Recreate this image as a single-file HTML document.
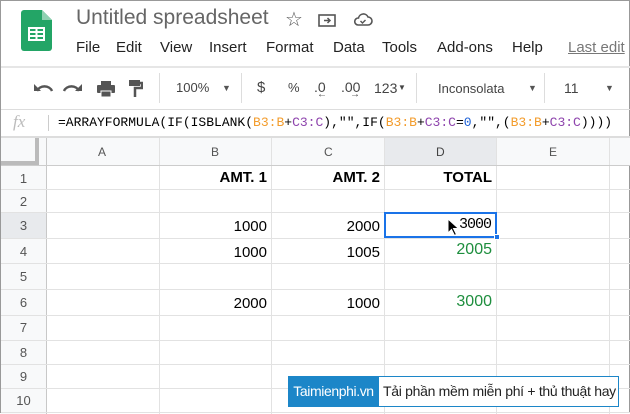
<!DOCTYPE html>
<html><head><meta charset="utf-8"><style>
*{margin:0;padding:0;box-sizing:border-box}
body{width:630px;height:413px;overflow:hidden;background:#fff;font-family:"Liberation Sans",Arial,sans-serif;position:relative;border:1px solid #999}
.a{position:absolute;white-space:nowrap}
.grid div{position:absolute}
.vl{background:#e2e2e2;width:1px;top:137px;height:276px}
.hl{background:#e2e2e2;height:1px;left:0;width:630px}
.rn{left:0;width:45px;text-align:center;font-size:13px;color:#555}
.cv{font-size:15px;text-align:right;color:#000}
</style></head><body>
<svg class="a" style="left:20px;top:9px" width="31" height="41" viewBox="0 0 31 41">
<path d="M3 0H21L31 10V38a3 3 0 0 1-3 3H3a3 3 0 0 1-3-3V3a3 3 0 0 1 3-3z" fill="#23a566"/>
<path d="M21 0V10H31z" fill="#8ed1b1"/>
<rect x="8" y="18" width="15" height="12" fill="none" stroke="#fff" stroke-width="2"/>
<line x1="8" y1="22" x2="23" y2="22" stroke="#fff" stroke-width="2"/><line x1="8" y1="26" x2="23" y2="26" stroke="#fff" stroke-width="2"/>
<line x1="15.5" y1="18" x2="15.5" y2="30" stroke="#fff" stroke-width="2"/>
</svg>
<div class="a" style="left:75px;top:5px;font-size:21px;color:#666">Untitled spreadsheet</div>
<div class="a" style="left:284px;top:6px;font-size:20px;color:#555">☆</div>
<svg class="a" style="left:317px;top:12px" width="18" height="14"><rect x="1" y="2" width="16" height="11" fill="none" stroke="#555" stroke-width="1.6"/><path d="M6 7.5h6M9.5 5l2.5 2.5-2.5 2.5" fill="none" stroke="#555" stroke-width="1.5"/></svg>
<svg class="a" style="left:352px;top:11px" width="20" height="16"><path d="M5 13h10a4 4 0 0 0 0-8 5 5 0 0 0-9.5 1A3.5 3.5 0 0 0 5 13z" fill="none" stroke="#555" stroke-width="1.6"/><path d="M7.5 9l2 2 3-3" fill="none" stroke="#555" stroke-width="1.4"/></svg>
<div class="a" style="top:38px;font-size:15px;color:#222;left:75px">File</div>
<div class="a" style="top:38px;font-size:15px;color:#222;left:115px">Edit</div>
<div class="a" style="top:38px;font-size:15px;color:#222;left:159px">View</div>
<div class="a" style="top:38px;font-size:15px;color:#222;left:208px">Insert</div>
<div class="a" style="top:38px;font-size:15px;color:#222;left:265px">Format</div>
<div class="a" style="top:38px;font-size:15px;color:#222;left:332px">Data</div>
<div class="a" style="top:38px;font-size:15px;color:#222;left:381px">Tools</div>
<div class="a" style="top:38px;font-size:15px;color:#222;left:436px">Add-ons</div>
<div class="a" style="top:38px;font-size:15px;color:#222;left:511px">Help</div>
<div class="a" style="top:38px;font-size:15px;color:#777;left:567px;text-decoration:underline">Last edit</div>
<div class="a" style="left:0;top:65px;width:630px;height:2px;background:#e6e6e6"></div>
<svg class="a" style="left:33px;top:80px" width="20" height="12"><path d="M3 10a8 7 0 0 1 15 0" fill="none" stroke="#555" stroke-width="2.5"/><path d="M0 3v7h7z" fill="#555"/></svg>
<svg class="a" style="left:61px;top:80px" width="20" height="12"><path d="M17 10a8 7 0 0 0-15 0" fill="none" stroke="#555" stroke-width="2.5"/><path d="M20 3v7h-7z" fill="#555"/></svg>
<svg class="a" style="left:96px;top:80px" width="18" height="16"><rect x="4" y="0" width="10" height="4" fill="#555"/><rect x="0" y="4" width="18" height="8" rx="1" fill="#555"/><rect x="4" y="10" width="10" height="6" fill="#555" stroke="#fff" stroke-width="1"/></svg>
<svg class="a" style="left:128px;top:79px" width="14" height="18"><rect x="0" y="0" width="11" height="6" fill="#555"/><path d="M11 3h2v5H6v9" fill="none" stroke="#555" stroke-width="2.5"/></svg>
<div class="a" style="left:158px;top:72px;width:1px;height:30px;background:#ddd"></div>
<div class="a" style="left:175px;top:79px;font-size:13px;color:#444">100%</div>
<div class="a" style="left:221px;top:82px;font-size:9px;color:#555">▼</div>
<div class="a" style="left:240px;top:72px;width:1px;height:30px;background:#ddd"></div>
<div class="a" style="left:256px;top:78px;font-size:15px;color:#444">$</div>
<div class="a" style="left:287px;top:79px;font-size:13px;color:#444">%</div>
<div class="a" style="left:313px;top:78px;font-size:14px;color:#444">.0</div>
<div class="a" style="left:316px;top:88px;font-size:10px;color:#444">←</div>
<div class="a" style="left:340px;top:78px;font-size:14px;color:#444">.00</div>
<div class="a" style="left:349px;top:88px;font-size:10px;color:#444">→</div>
<div class="a" style="left:373px;top:79px;font-size:14px;color:#444">123</div>
<div class="a" style="left:397px;top:82px;font-size:8px;color:#444">▼</div>
<div class="a" style="left:415px;top:72px;width:1px;height:30px;background:#ddd"></div>
<div class="a" style="left:437px;top:80px;font-size:13px;color:#444">Inconsolata</div>
<div class="a" style="left:527px;top:82px;font-size:9px;color:#555">▼</div>
<div class="a" style="left:543px;top:72px;width:1px;height:30px;background:#ddd"></div>
<div class="a" style="left:563px;top:79px;font-size:14px;color:#444">11</div>
<div class="a" style="left:604px;top:82px;font-size:9px;color:#555">▼</div>
<div class="a" style="left:0;top:108px;width:630px;height:1px;background:#ddd"></div>
<div class="a" style="left:12px;top:111px;font-size:17px;color:#bbb;font-family:'Liberation Serif',serif;font-style:italic">fx</div>
<div class="a" style="left:47px;top:114px;width:1px;height:16px;background:#ccc"></div>
<div class="a" style="left:57px;top:114px;font-size:13px;font-family:'Liberation Mono',monospace;color:#000">=ARRAYFORMULA(IF(ISBLANK(<span style="color:#f39c2c">B3:B</span>+<span style="color:#8e44ad">C3:C</span>),"",IF(<span style="color:#f39c2c">B3:B</span>+<span style="color:#8e44ad">C3:C</span>=<span style="color:#1a5fd6">0</span>,"",(<span style="color:#f39c2c">B3:B</span>+<span style="color:#8e44ad">C3:C</span>))))</div>
<div class="a" style="left:0;top:135px;width:630px;height:2px;background:#ddd"></div>
<div class="a" style="left:0;top:137px;width:630px;height:27px;background:#f8f9fa"></div>
<div class="a" style="left:383px;top:137px;width:112px;height:27px;background:#e8eaed"></div>
<div class="a" style="left:0;top:137px;width:45px;height:276px;background:#f8f9fa"></div>
<div class="a" style="left:0;top:211px;width:45px;height:26px;background:#e8eaed"></div>
<div class="a" style="left:0;top:160px;width:37px;height:4px;background:#bbb"></div>
<div class="a" style="left:34px;top:137px;width:4px;height:27px;background:#bbb"></div>
<div class="grid">
<div class="vl" style="left:45px;background:#c8c8c8"></div><div class="vl" style="left:158px"></div><div class="vl" style="left:270px"></div><div class="vl" style="left:383px"></div><div class="vl" style="left:495px"></div><div class="vl" style="left:608px"></div>
<div class="hl" style="top:164px;background:#ccc"></div><div class="hl" style="top:188px"></div><div class="hl" style="top:211px"></div><div class="hl" style="top:237px"></div><div class="hl" style="top:262px"></div><div class="hl" style="top:288px"></div><div class="hl" style="top:314px"></div><div class="hl" style="top:339px"></div><div class="hl" style="top:363px"></div><div class="hl" style="top:387px"></div><div class="hl" style="top:411px"></div>
</div>
<div class="a" style="left:97px;top:144px;font-size:12px;color:#555">A</div>
<div class="a" style="left:210px;top:144px;font-size:12px;color:#555">B</div>
<div class="a" style="left:323px;top:144px;font-size:12px;color:#555">C</div>
<div class="a" style="left:435px;top:144px;font-size:12px;color:#444">D</div>
<div class="a" style="left:548px;top:144px;font-size:12px;color:#555">E</div>
<div class="a rn" style="top:170px">1</div><div class="a rn" style="top:193px">2</div><div class="a rn" style="top:217px">3</div><div class="a rn" style="top:243px">4</div><div class="a rn" style="top:268px">5</div><div class="a rn" style="top:294px">6</div><div class="a rn" style="top:319px">7</div><div class="a rn" style="top:344px">8</div><div class="a rn" style="top:368px">9</div><div class="a rn" style="top:392px">10</div>
<div class="a cv" style="left:158px;width:108px;top:168px;font-weight:bold">AMT. 1</div>
<div class="a cv" style="left:270px;width:109px;top:168px;font-weight:bold">AMT. 2</div>
<div class="a cv" style="left:383px;width:108px;top:168px;font-weight:bold">TOTAL</div>
<div class="a cv" style="left:158px;width:108px;top:217px">1000</div>
<div class="a cv" style="left:270px;width:109px;top:217px">2000</div>
<div class="a cv" style="left:158px;width:108px;top:243px">1000</div>
<div class="a cv" style="left:270px;width:109px;top:243px">1005</div>
<div class="a cv" style="left:158px;width:108px;top:294px">2000</div>
<div class="a cv" style="left:270px;width:109px;top:294px">1000</div>
<div class="a cv" style="left:383px;width:108px;top:240px;color:#1e8e3e;font-size:16px">2005</div>
<div class="a cv" style="left:383px;width:108px;top:292px;color:#1e8e3e;font-size:16px">3000</div>
<div class="a" style="left:383px;top:211px;width:113px;height:26px;border:2px solid #1a73e8"></div>
<div class="a" style="left:493px;top:233px;width:6px;height:6px;background:#1a73e8;border:1px solid #fff"></div>
<div class="a" style="left:458px;top:215px;font-size:15px;font-family:'Liberation Mono',monospace;letter-spacing:-1px;color:#000">3000</div>
<svg class="a" style="left:446px;top:217px" width="14" height="20"><path d="M1 1v14l3.5-3.5 3 6 2-1-3-6h5z" fill="#000" stroke="#fff" stroke-width="1"/></svg>
<div class="a" style="left:287px;top:375px;width:331px;height:31px;border:1px solid #1c86c8;background:#fff"></div>
<div class="a" style="left:287px;top:375px;width:91px;height:31px;background:#1c86c8;color:#fff;font-size:14px;line-height:31px;text-align:center;letter-spacing:-0.4px">Taimienphi.vn</div>
<div class="a" style="left:382px;top:375px;line-height:31px;font-size:14px;color:#222;letter-spacing:-0.3px">Tải phần mềm miễn phí + thủ thuật hay</div>
</body></html>
